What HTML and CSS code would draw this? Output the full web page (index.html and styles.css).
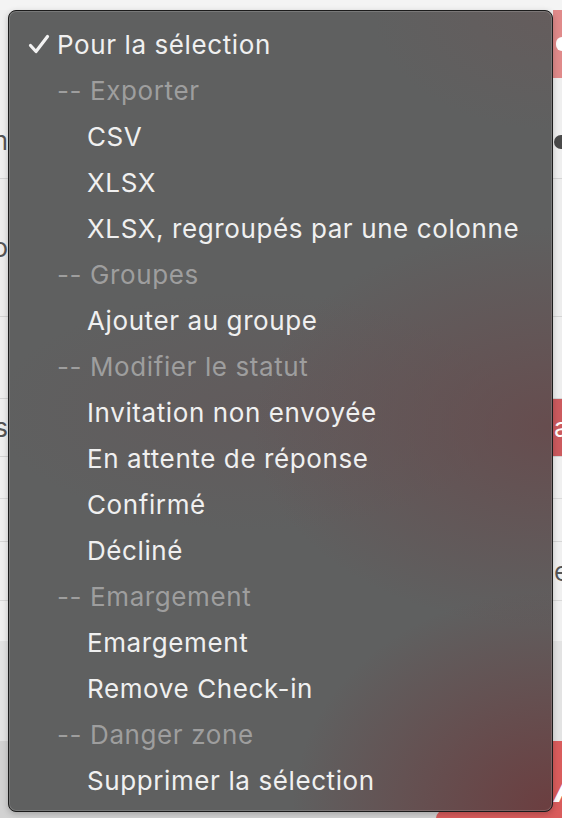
FILE: index.html
```html
<!DOCTYPE html>
<html lang="fr">
<head>
<meta charset="utf-8">
<title>Menu</title>
<link rel="stylesheet" href="styles.css">
</head>
<body>
<div class="page">
  <div class="row row-top"><div class="l"></div><div class="r"></div></div>
  <div class="row row-head">
    <div class="l"><span class="clip">Nom</span></div>
    <div class="r">
      <span class="red-btn"><span class="dot"></span></span>
      <span class="sort"></span>
    </div>
  </div>
  <div class="row row-a">
    <div class="l"><span class="clip">Bo</span></div>
    <div class="r"></div>
  </div>
  <div class="row row-b"><div class="l"></div><div class="r"></div></div>
  <div class="row row-c">
    <div class="l"><span class="clip">Os</span></div>
    <div class="r red"><span class="clip-r">a</span></div>
  </div>
  <div class="row row-d"><div class="l"></div><div class="r"></div></div>
  <div class="row row-e"><div class="l"></div><div class="r"></div></div>
  <div class="row row-f"><div class="l"></div><div class="r"><span class="clip-r dark">e</span></div></div>
  <div class="row row-g"><div class="l"></div><div class="r"></div></div>
  <div class="row row-h"><div class="l"></div><div class="r"></div></div>
  <div class="row row-i"><div class="l"></div><div class="r red"><span class="clip-r big">A</span></div></div>
</div>
<div class="red-blob"></div>

<div class="menu">
  <div class="item checked"><svg class="check" width="22" height="20" viewBox="0 0 22 20"><path d="M2.5 11.5 L8 17.5 L19.5 2.5" fill="none" stroke="#f2f2f2" stroke-width="3.2" stroke-linecap="round" stroke-linejoin="round"/></svg>Pour la sélection</div>
  <div class="item label">-- Exporter</div>
  <div class="item opt">CSV</div>
  <div class="item opt">XLSX</div>
  <div class="item opt">XLSX, regroupés par une colonne</div>
  <div class="item label">-- Groupes</div>
  <div class="item opt">Ajouter au groupe</div>
  <div class="item label">-- Modifier le statut</div>
  <div class="item opt">Invitation non envoyée</div>
  <div class="item opt">En attente de réponse</div>
  <div class="item opt">Confirmé</div>
  <div class="item opt">Décliné</div>
  <div class="item label">-- Emargement</div>
  <div class="item opt">Emargement</div>
  <div class="item opt">Remove Check-in</div>
  <div class="item label">-- Danger zone</div>
  <div class="item opt">Supprimer la sélection</div>
</div>
</body>
</html>
```
FILE: styles.css
```css
html, body {
  margin: 0;
  padding: 0;
}
body {
  width: 562px;
  height: 818px;
  overflow: hidden;
  background: #d2d2d2;
  font-family: Inter, "Liberation Sans", sans-serif;
  position: relative;
}
.page {
  display: flex;
  flex-direction: column;
  height: 818px;
  overflow: hidden;
}
.row {
  display: flex;
  justify-content: space-between;
  align-items: center;
  border-bottom: 1px solid #d4d4d4;
  background: #f0f0f0;
  flex: none;
}
.row .l {
  width: 8px;
  height: 100%;
  overflow: hidden;
  display: flex;
  justify-content: flex-end;
  align-items: center;
}
.row .r {
  width: 9px;
  height: 100%;
  overflow: hidden;
  display: flex;
  justify-content: flex-start;
  align-items: center;
}
.clip {
  font-size: 26px;
  color: #555;
  white-space: nowrap;
}
.clip-r {
  font-size: 26px;
  color: #fff;
  white-space: nowrap;
  padding-left: 1px;
}
.clip-r.dark { color: #555; }
.clip-r.big { font-weight: 700; font-size: 34px; font-style: italic; margin-top: 28px; }
.row-top { height: 10px; border-bottom: none; background: #f4f4f4; }
.row-head { height: 168px; background: #efefef; }
.row-head .l { align-items: flex-end; padding-bottom: 22px; box-sizing: border-box; }
.row-head .r { flex-direction: column; justify-content: flex-start; align-items: stretch; }
.red-btn {
  height: 68px;
  background: #e08a8a;
  display: flex;
  align-items: center;
  flex: none;
}
.dot {
  width: 6px;
  height: 14px;
  border-radius: 7px 0 0 7px;
  background: #fff;
  margin-left: 3px;
}
.sort {
  width: 8px;
  height: 14px;
  border-radius: 7px 0 0 7px;
  background: #4a4a4a;
  margin-top: 57px;
  margin-left: 1px;
  flex: none;
}
.row-a { height: 137px; background: #ededed; }
.row-b { height: 81px; background: #eeeeee; }
.row-c { height: 57px; background: #efefef; }
.row-c .r.red { background: #cc5a5e; }
.row-d { height: 41px; border-bottom-color: #dadada; }
.row-e { height: 42px; border-bottom-color: #d6d6d6; }
.row-f { height: 58px; border-bottom-color: #d8d8d8; }
.row-g { height: 40px; border-bottom: none; }
.row-h { height: 100px; border-bottom: none; background: #e3e3e3; }
.row-i { height: 78px; border-bottom: none; background: #d2d2d2; }
.row-i .r.red { background: #d95c5c; align-items: flex-start; }
.red-blob {
  position: absolute;
  left: 436px;
  top: 802px;
  width: 126px;
  height: 16px;
  border-radius: 40px 0 0 0 / 16px 0 0 0;
  background: #d95c5c;
}

.menu {
  position: absolute;
  left: 8px;
  top: 10px;
  width: 545px;
  height: 802px;
  box-sizing: border-box;
  padding-top: 10px;
  border: 1px solid #1c1c1c;
  border-radius: 8px;
  box-shadow: inset 0 0 0 1px rgba(255,255,255,0.16), 0 2px 6px rgba(0,0,0,0.22);
  background:
    radial-gradient(ellipse 260px 220px at 100% 100%, rgba(108,60,62,0.95), rgba(108,60,62,0) 100%),
    radial-gradient(ellipse 300px 200px at 100% 52%, rgba(104,72,74,0.8), rgba(104,72,74,0) 100%),
    radial-gradient(ellipse 180px 120px at 100% 0%, rgba(104,90,90,0.6), rgba(104,90,90,0) 100%),
    radial-gradient(ellipse 260px 120px at 45% 50%, rgba(100,86,88,0.5), rgba(100,86,88,0) 100%),
    #5f6060;
  color: #f0f0f0;
  font-size: 26px;
  overflow: hidden;
}
.item {
  height: 46px;
  display: flex;
  align-items: center;
  white-space: nowrap;
  letter-spacing: 0.6px;
}
.item.checked {
  padding-left: 19px;
}
.check {
  margin-right: 7px;
  flex: none;
}
.item.label {
  padding-left: 48px;
  color: #9e9e9e;
}
.item.opt {
  padding-left: 78px;
}
```
